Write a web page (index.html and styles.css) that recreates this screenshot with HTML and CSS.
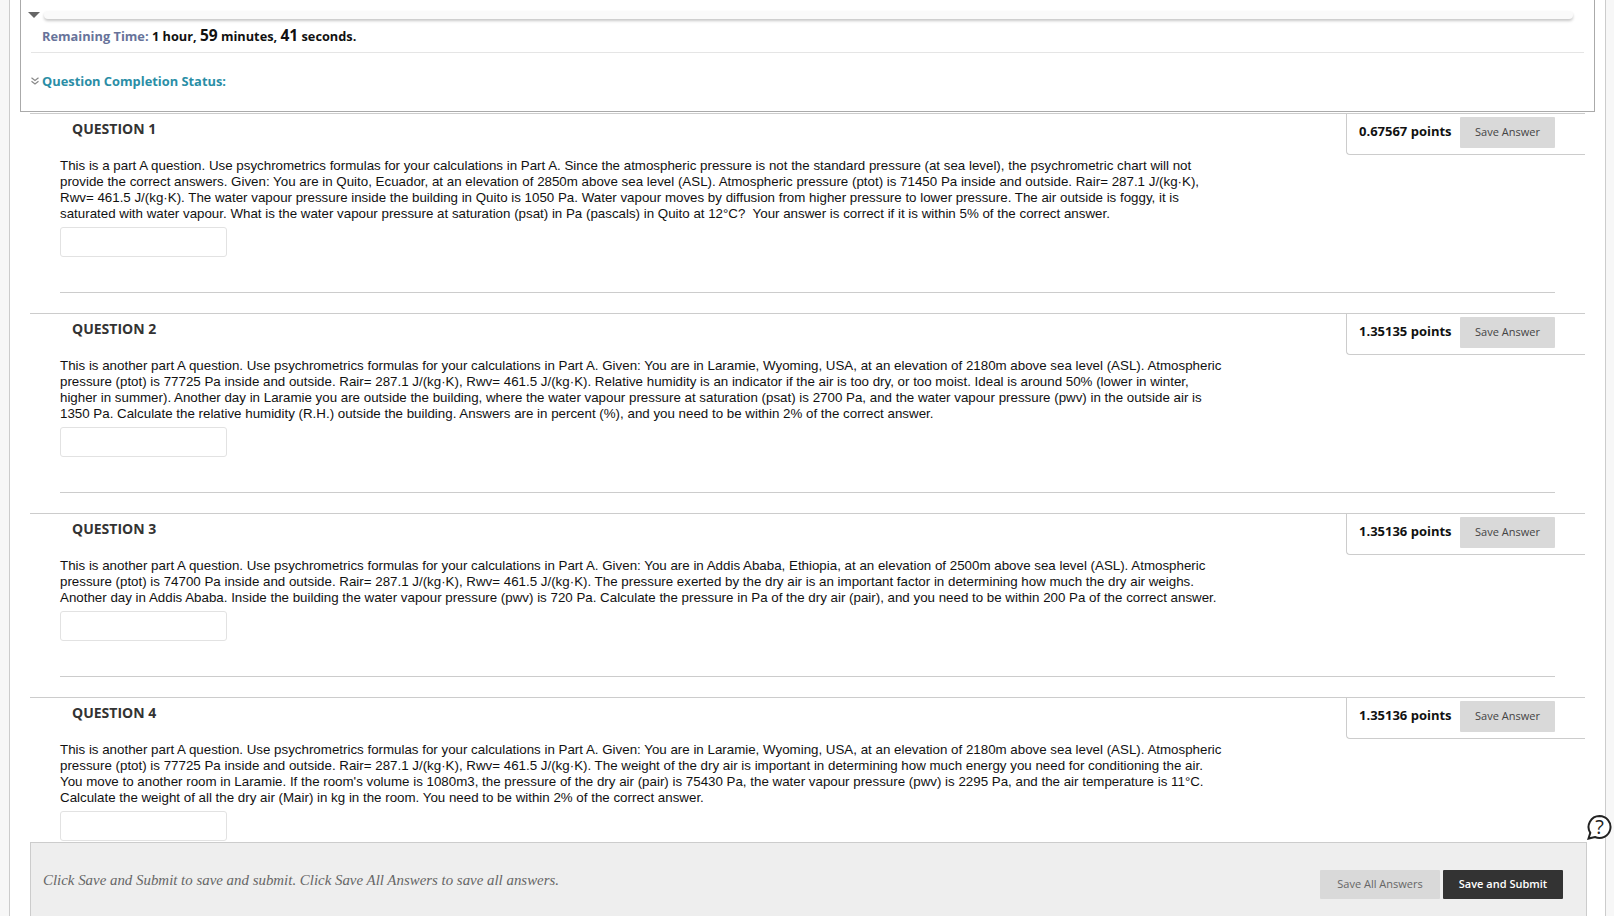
FILE: index.html
```html
<!DOCTYPE html>
<html lang="en">

<head>
  <meta charset="UTF-8">
  <title>Take Test</title>
  <link rel="stylesheet" href="styles.css">
</head>

<body>
  <div class="page">
    <div class="content">

      <!-- timer + completion status -->
      <div class="status-box">
        <div class="timer-bar-row">
          <span class="arrow-down"></span>
          <div class="timer-bar"></div>
        </div>
        <div class="remaining">
          <span class="remaining-label">Remaining Time:</span>
          1 hour, <span class="big">59</span> minutes, <span class="big">41</span> seconds.
        </div>
        <div class="completion">
          <svg class="chevrons" width="8" height="8" viewBox="0 0 8 8">
            <polyline points="0.5,0.8 4,3.5 7.5,0.8" />
            <polyline points="0.5,4.3 4,7 7.5,4.3" />
          </svg>
          <span>Question Completion Status:</span>
        </div>
      </div>

      <div class="question">
        <div class="q-head">
          <h3 class="q-title">QUESTION 1</h3>
          <div class="q-points">
            <span>0.67567 points</span>
            <button class="btn-save">Save Answer</button>
          </div>
        </div>
        <div class="q-body">
          <p>This is a part A question. Use psychrometrics formulas for your calculations in Part A. Since the atmospheric pressure is not the standard pressure (at sea level), the psychrometric chart will not<br>provide the correct answers. Given: You are in Quito, Ecuador, at an elevation of 2850m above sea level (ASL). Atmospheric pressure (ptot) is 71450 Pa inside and outside. Rair= 287.1 J/(kg·K),<br>Rwv= 461.5 J/(kg·K). The water vapour pressure inside the building in Quito is 1050 Pa. Water vapour moves by diffusion from higher pressure to lower pressure. The air outside is foggy, it is<br>saturated with water vapour. What is the water vapour pressure at saturation (psat) in Pa (pascals) in Quito at 12°C?&nbsp; Your answer is correct if it is within 5% of the correct answer.</p>
          <input class="answer" type="text">
          <hr class="q-rule">
        </div>
      </div>

      <div class="question">
        <div class="q-head">
          <h3 class="q-title">QUESTION 2</h3>
          <div class="q-points">
            <span>1.35135 points</span>
            <button class="btn-save">Save Answer</button>
          </div>
        </div>
        <div class="q-body">
          <p>This is another part A question. Use psychrometrics formulas for your calculations in Part A. Given: You are in Laramie, Wyoming, USA, at an elevation of 2180m above sea level (ASL). Atmospheric<br>pressure (ptot) is 77725 Pa inside and outside. Rair= 287.1 J/(kg·K), Rwv= 461.5 J/(kg·K). Relative humidity is an indicator if the air is too dry, or too moist. Ideal is around 50% (lower in winter,<br>higher in summer). Another day in Laramie you are outside the building, where the water vapour pressure at saturation (psat) is 2700 Pa, and the water vapour pressure (pwv) in the outside air is<br>1350 Pa. Calculate the relative humidity (R.H.) outside the building. Answers are in percent (%), and you need to be within 2% of the correct answer.</p>
          <input class="answer" type="text">
          <hr class="q-rule">
        </div>
      </div>

      <div class="question">
        <div class="q-head">
          <h3 class="q-title">QUESTION 3</h3>
          <div class="q-points">
            <span>1.35136 points</span>
            <button class="btn-save">Save Answer</button>
          </div>
        </div>
        <div class="q-body">
          <p>This is another part A question. Use psychrometrics formulas for your calculations in Part A. Given: You are in Addis Ababa, Ethiopia, at an elevation of 2500m above sea level (ASL). Atmospheric<br>pressure (ptot) is 74700 Pa inside and outside. Rair= 287.1 J/(kg·K), Rwv= 461.5 J/(kg·K). The pressure exerted by the dry air is an important factor in determining how much the dry air weighs.<br>Another day in Addis Ababa. Inside the building the water vapour pressure (pwv) is 720 Pa. Calculate the pressure in Pa of the dry air (pair), and you need to be within 200 Pa of the correct answer.</p>
          <input class="answer" type="text">
          <hr class="q-rule">
        </div>
      </div>

      <div class="question">
        <div class="q-head">
          <h3 class="q-title">QUESTION 4</h3>
          <div class="q-points">
            <span>1.35136 points</span>
            <button class="btn-save">Save Answer</button>
          </div>
        </div>
        <div class="q-body">
          <p>This is another part A question. Use psychrometrics formulas for your calculations in Part A. Given: You are in Laramie, Wyoming, USA, at an elevation of 2180m above sea level (ASL). Atmospheric<br>pressure (ptot) is 77725 Pa inside and outside. Rair= 287.1 J/(kg·K), Rwv= 461.5 J/(kg·K). The weight of the dry air is important in determining how much energy you need for conditioning the air.<br>You move to another room in Laramie. If the room's volume is 1080m3, the pressure of the dry air (pair) is 75430 Pa, the water vapour pressure (pwv) is 2295 Pa, and the air temperature is 11°C.<br>Calculate the weight of all the dry air (Mair) in kg in the room. You need to be within 2% of the correct answer.</p>
          <input class="answer" type="text">
          <hr class="q-rule">
        </div>
      </div>

      <div class="submit-bar">
        <em class="submit-note">Click Save and Submit to save and submit. Click Save All Answers to save all answers.</em>
        <div class="submit-btns">
          <button class="btn-all">Save All Answers</button>
          <button class="btn-submit">Save and Submit</button>
        </div>
      </div>
    </div>

    <svg class="help" width="26" height="26" viewBox="0 0 26 26">
      <path class="help-bubble" d="M13.5 2a11 11 0 1 1-4.6 21L2.5 24.500l1.800-5.600A11 11 0 0 1 13.500 2z" />
      <text class="help-mark" x="13.500" y="20" text-anchor="middle">?</text>
    </svg>
  </div>
</body>

</html>
```

FILE: styles.css
```css
* {
  margin: 0;
  padding: 0;
  box-sizing: border-box;
}

html,
body {
  height: 100%;
  overflow: hidden;
  background-color: #fff;
}

.page {
  position: relative;
  height: 916px;
  overflow: hidden;
  background-color: #f7f7f7;
  padding-left: 9px;
  padding-right: 9px;
  font-family: "Liberation Sans", Arial, sans-serif;
}

.content {
  position: relative;
  width: 1597px;
  height: 916px;
  overflow: hidden;
  background-color: #fff;
  border-left: 1px solid #ccc;
  border-right: 1px solid #ccc;
}

/* top box */
.status-box {
  height: 112px;
  margin: 0 10px;
  padding: 11px 10px 0;
  border: 1px solid #aaa;
  border-top: 0;
  font-family: "Open Sans", sans-serif;
  font-size: 12.85px;
  font-weight: 700;
}

.timer-bar-row {
  display: flex;
  align-items: flex-start;
  margin-left: -3px;
  margin-right: 11px;
}

.arrow-down {
  width: 0;
  height: 0;
  margin-top: 1px;
  margin-right: 4px;
  border-left: 6px solid transparent;
  border-right: 6px solid transparent;
  border-top: 6px solid #666;
}

.timer-bar {
  flex: 1;
  height: 8px;
  background-color: #fafafa;
  border-radius: 5px;
  box-shadow: 0 2px 3px rgba(0, 0, 0, 0.22);
}

.remaining {
  height: 34px;
  padding-left: 11px;
  font-size: 12.75px;
  line-height: 32px;
  color: #111;
  border-bottom: 1px solid #e5e5e5;
}

.remaining-label {
  font-size: 12.8px;
  color: #67739a;
}

.remaining .big {
  font-size: 15.5px;
}

.completion {
  display: flex;
  align-items: center;
  gap: 3px;
  height: 55px;
  color: #2a8ea6;
}

.chevrons {
  fill: none;
  stroke: #888;
  stroke-width: 1.2;
}

/* question */
.question {
  margin: 1px 20px 0;
  border-top: 1px solid #ccc;
}

.question + .question {
  margin-top: 20px;
}

.q-head {
  display: flex;
  justify-content: space-between;
  align-items: flex-start;
  height: 44px;
}

.q-title {
  padding: 5px 0 0 42px;
  font-family: "Open Sans", sans-serif;
  font-size: 14px;
  font-weight: 700;
  line-height: 20px;
  color: #333;
}

.q-points {
  display: flex;
  align-items: flex-start;
  justify-content: space-between;
  width: 239px;
  height: 41px;
  padding: 3px 30px 0 12px;
  border-left: 1px solid #ccc;
  border-bottom: 1px solid #ccc;
  border-radius: 0 0 0 4px;
  font-family: "Open Sans", sans-serif;
  font-size: 13px;
  font-weight: 700;
  line-height: 28px;
  color: #111;
}

.btn-save {
  width: 95px;
  height: 31px;
  padding-bottom: 2px;
  border: 0;
  border-radius: 1px;
  background-color: #d9d9d9;
  color: #444;
  font-family: "Open Sans", sans-serif;
  font-size: 11px;
}

.q-body {
  padding: 0 30px;
}

.q-body p {
  font-size: 13.33px;
  line-height: 16px;
  color: #111;
  white-space: nowrap;
}

.answer {
  display: block;
  width: 167px;
  height: 30px;
  margin-top: 5px;
  border: 1px solid #e2e2e2;
  border-radius: 3px;
  background-color: #fff;
}

.q-rule {
  height: 0;
  margin-top: 35px;
  border: 0;
  border-top: 1px solid #ccc;
}

/* bottom bar */
.submit-bar {
  position: absolute;
  left: 20px;
  top: 842px;
  width: 1557px;
  height: 74px;
  display: flex;
  justify-content: space-between;
  padding: 27px 23px 0 12px;
  background-color: #eee;
  border: 1px solid #ccc;
  border-bottom: 0;
}

.submit-note {
  font-family: "Liberation Serif", serif;
  font-size: 14.9px;
  line-height: 20px;
  color: #666;
}

.submit-btns {
  display: flex;
  gap: 3px;
}

.btn-all,
.btn-submit {
  width: 120px;
  height: 29px;
  padding-bottom: 2px;
  border: 0;
  border-radius: 1px;
  font-family: "Open Sans", sans-serif;
  font-size: 11px;
}

.btn-all {
  background-color: #d9d9d9;
  color: #666;
}

.btn-submit {
  background-color: #333;
  color: #fff;
  font-weight: 600;
}

/* help bubble, sits over the frame edge */
.help {
  position: absolute;
  left: 1586px;
  top: 814px;
}

.help-bubble {
  fill: #fff;
  stroke: #222;
  stroke-width: 2;
}

.help-mark {
  font-family: "Open Sans", sans-serif;
  font-size: 20px;
  fill: #222;
}
```
